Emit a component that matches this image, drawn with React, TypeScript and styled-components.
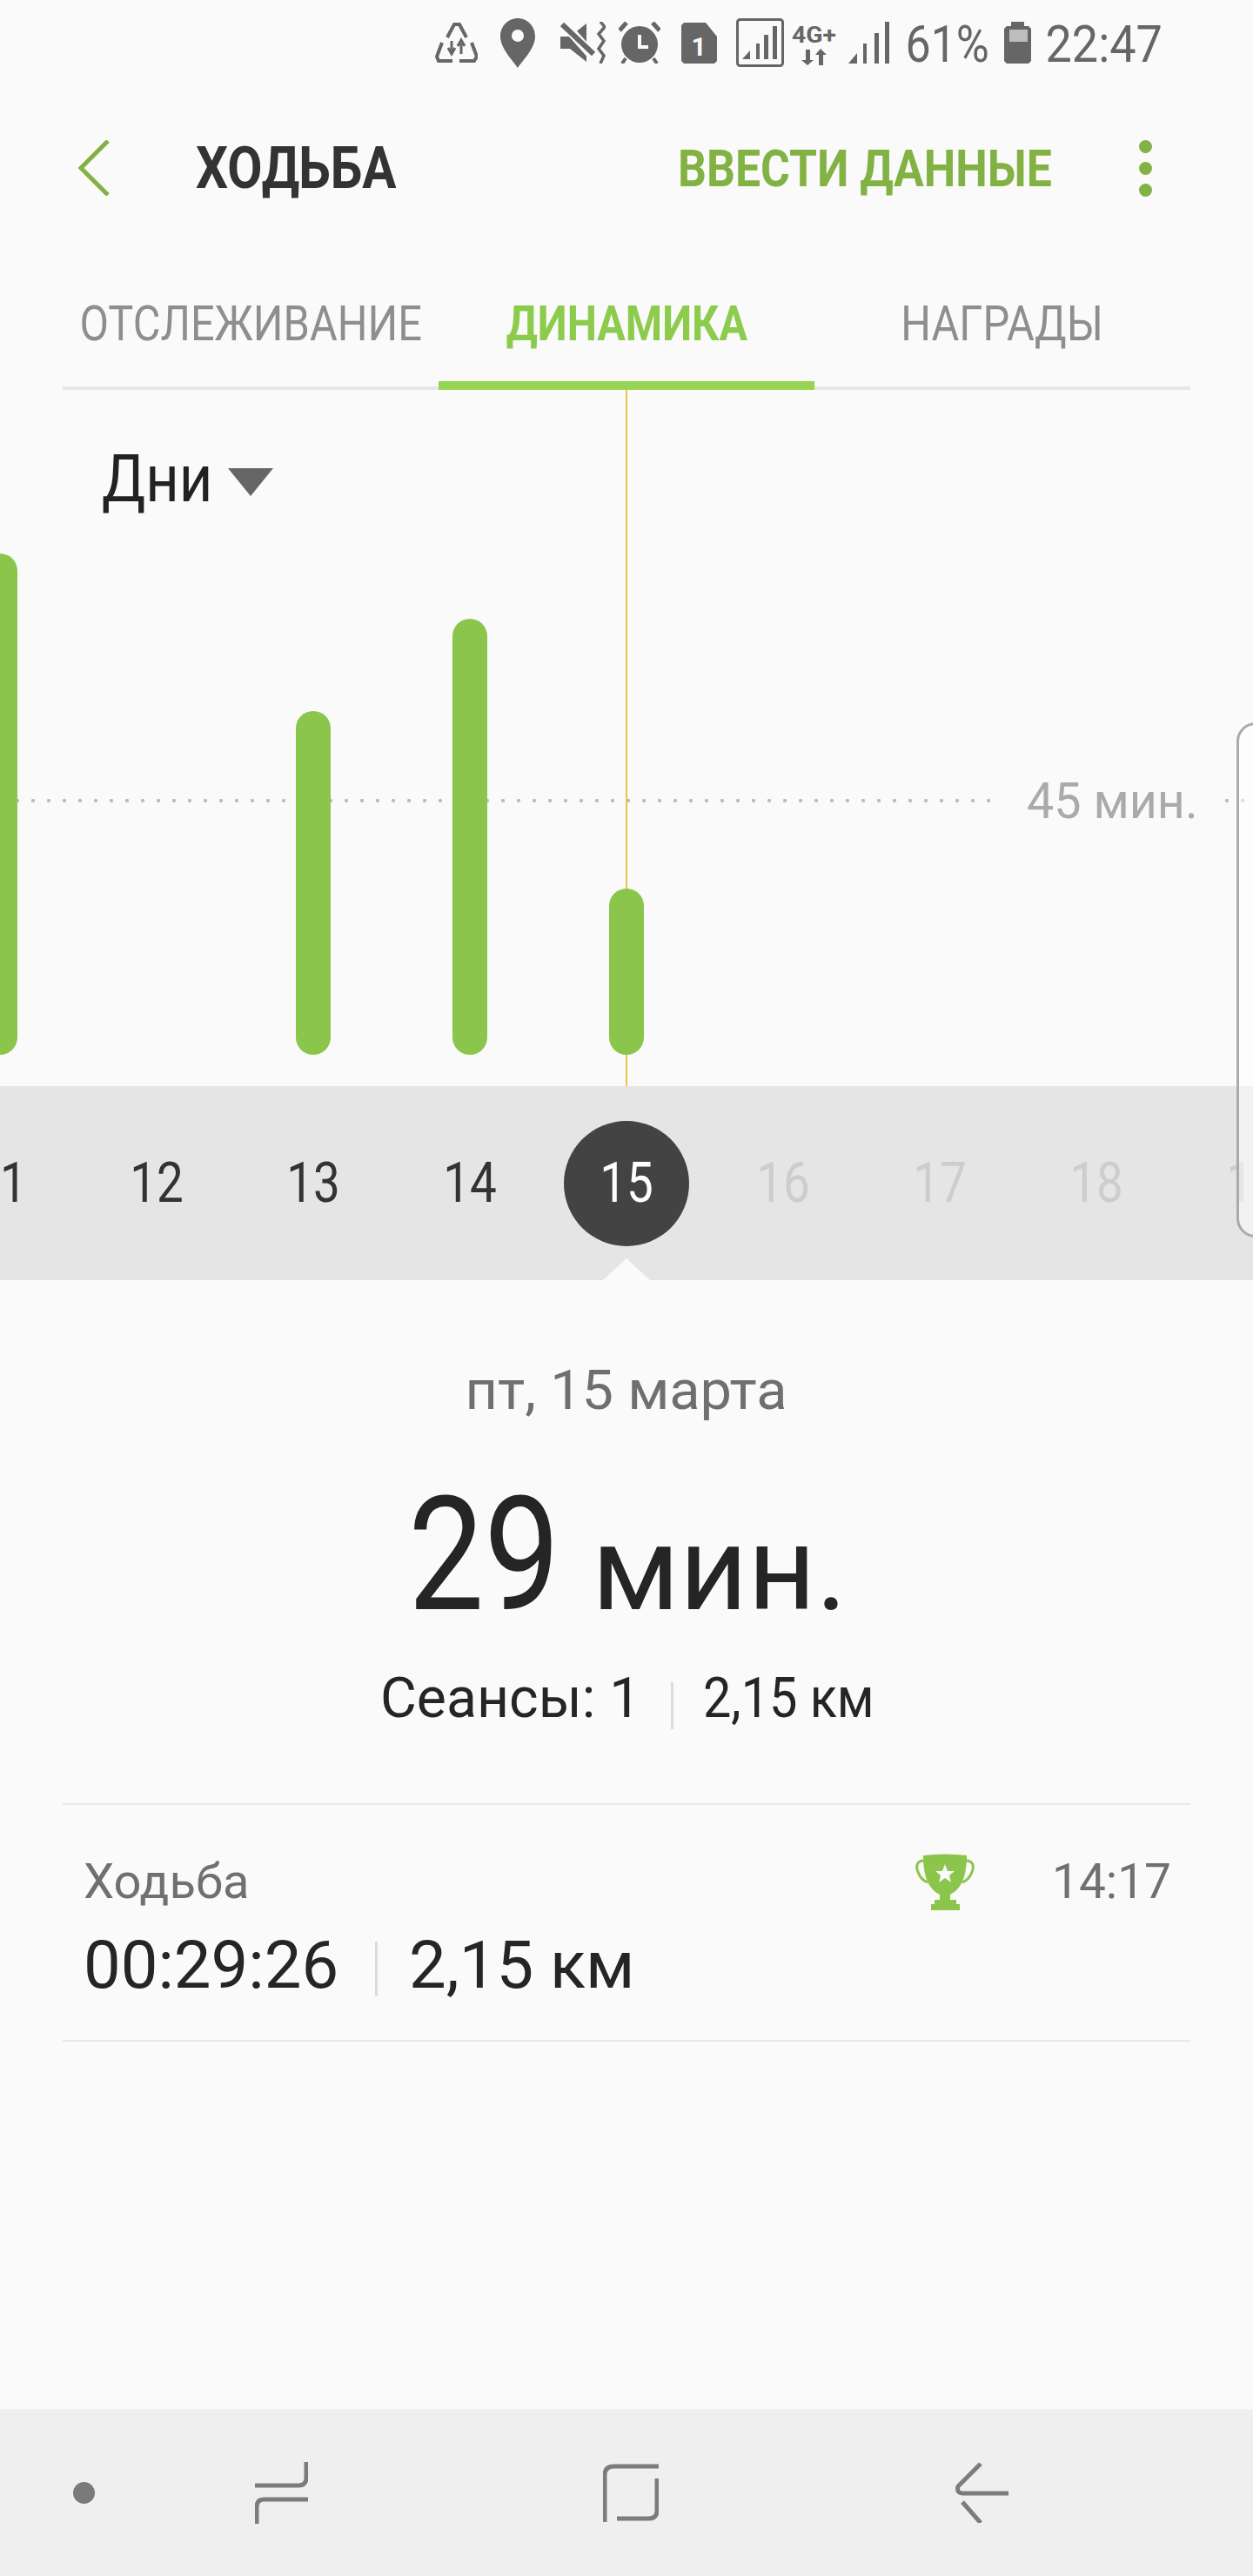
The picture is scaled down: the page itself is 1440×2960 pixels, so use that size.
import React from "react";
import styled, { createGlobalStyle } from "styled-components";

const Global = createGlobalStyle`
  html, body { margin: 0; padding: 0; background: #fafafa; }
  * { box-sizing: border-box; }
`;

const Page = styled.div`
  position: relative;
  width: 1440px;
  height: 2960px;
  overflow: hidden;
  background: #fafafa;
  display: flex;
  flex-direction: column;
  font-family: Roboto, "Liberation Sans", sans-serif;
`;

const Squeezed = styled.span<{ $x: number; $origin?: string }>`
  display: inline-block;
  white-space: nowrap;
  transform: scaleX(${(p) => p.$x});
  transform-origin: ${(p) => p.$origin || "center"} center;
`;

const StatusBar = styled.div`
  height: 98px;
  flex: none;
  display: flex;
  align-items: center;
  padding-left: 500px;
  color: #666;
`;

const StatusItem = styled.div<{ $gap: number; $w: number }>`
  margin-left: ${(p) => p.$gap}px;
  width: ${(p) => p.$w}px;
  flex: none;
  display: flex;
  align-items: center;
  justify-content: center;
`;

const StatusText = styled(StatusItem)`
  padding-top: 4px;
  font-size: 60px;
  line-height: 60px;
`;

const Toolbar = styled.div`
  height: 190px;
  flex: none;
  display: flex;
  align-items: center;
  padding-left: 90px;
`;

const Title = styled.div`
  margin-left: 99px;
  width: 230px;
  font-size: 66px;
  font-weight: 700;
  color: #333;
`;

const Action = styled.div`
  margin-left: 324px;
  width: 428px;
  font-size: 59px;
  font-weight: 700;
  color: #83b244;
`;

const Kebab = styled.div`
  margin-left: 102px;
  display: flex;
  flex-direction: column;
  gap: 10px;
`;

const KebabDot = styled.span`
  width: 15px;
  height: 15px;
  border-radius: 50%;
  background: #83b244;
`;

const Tabs = styled.div`
  height: 160px;
  flex: none;
  margin: 0 72px;
  display: grid;
  grid-template-columns: repeat(3, 432px);
  border-bottom: 4px solid #e6e6e6;
`;

const Tab = styled.div<{ $active?: boolean }>`
  position: relative;
  display: flex;
  align-items: center;
  justify-content: center;
  padding-top: 11px;
  font-size: 56px;
  font-weight: ${(p) => (p.$active ? 700 : 400)};
  color: ${(p) => (p.$active ? "#8ccb4c" : "#8e8e8e")};
  &::after {
    content: "";
    display: ${(p) => (p.$active ? "block" : "none")};
    position: absolute;
    left: 0;
    right: 0;
    bottom: -4px;
    height: 10px;
    background: #96d452;
  }
`;

const Chart = styled.div`
  position: relative;
  height: 800px;
  flex: none;
`;

const RangeSelect = styled.div`
  position: absolute;
  z-index: 2;
  left: 117px;
  top: 57px;
  display: flex;
  align-items: center;
  font-size: 76px;
  line-height: 90px;
  color: #222;
`;

const RangeLabel = styled.div`
  width: 122px;
`;

const Caret = styled.div`
  margin-left: 23px;
  margin-top: 8px;
  width: 0;
  height: 0;
  border-left: 26px solid transparent;
  border-right: 26px solid transparent;
  border-top: 32px solid #666;
`;

const Cursor = styled.div`
  position: absolute;
  left: 719px;
  top: 0;
  bottom: 0;
  width: 2px;
  background: #ecc643;
`;

const GoalLine = styled.div`
  position: absolute;
  left: 0;
  right: 0;
  top: 470px;
  height: 4px;
  display: flex;
  align-items: center;
`;

const Dots = styled.div<{ $w: number }>`
  width: ${(p) => p.$w}px;
  height: 4px;
  flex: none;
  background-image: radial-gradient(circle at 2px 2px, #bcbcbc 2px, transparent 2.3px);
  background-size: 18px 4px;
  background-repeat: repeat-x;
`;

const GoalLabel = styled.div`
  margin-left: 37px;
  margin-right: 35px;
  width: 193px;
  flex: none;
  font-size: 58px;
  color: #aaa;
`;

const Columns = styled.div`
  position: relative;
  height: 100%;
  margin-left: -90px;
  padding-bottom: 36px;
  display: grid;
  grid-template-columns: repeat(9, 180px);
  align-items: end;
  justify-items: center;
`;

const Bar = styled.div<{ $h: number }>`
  width: 40px;
  height: ${(p) => p.$h}px;
  border-radius: 20px;
  background: #8bc54b;
`;

const DateStrip = styled.div`
  height: 223px;
  flex: none;
  position: relative;
  margin-left: -90px;
  width: 1620px;
  background: #e5e5e5;
  display: grid;
  grid-template-columns: repeat(9, 180px);
  align-items: center;
  justify-items: center;
  &::after {
    content: "";
    position: absolute;
    left: 783px;
    bottom: 0;
    border-left: 27px solid transparent;
    border-right: 27px solid transparent;
    border-bottom: 25px solid #fafafa;
  }
`;

const Day = styled.div<{ $state: "past" | "current" | "future" }>`
  width: 144px;
  height: 144px;
  border-radius: 50%;
  display: flex;
  align-items: center;
  justify-content: center;
  font-size: 64px;
  background: ${(p) => (p.$state === "current" ? "#434343" : "transparent")};
  color: ${(p) =>
    p.$state === "current" ? "#fff" : p.$state === "past" ? "#333" : "#cdcdcd"};
`;

const EdgeHandle = styled.div`
  position: absolute;
  left: 1421px;
  top: 830px;
  width: 40px;
  height: 592px;
  border: 3px solid #aaa;
  border-radius: 22px 0 0 22px;
  background: rgba(255, 255, 255, 0.5);
`;

const Summary = styled.div`
  flex: none;
  height: 601px;
  display: flex;
  flex-direction: column;
  align-items: center;
  padding-top: 89px;
`;

const SummaryDate = styled.div`
  font-size: 63px;
  line-height: 76px;
  color: #6f6f6f;
`;

const Total = styled.div`
  margin-top: 41px;
  display: flex;
  align-items: baseline;
  height: 220px;
  color: #252525;
`;

const TotalValue = styled.span`
  font-size: 181px;
  line-height: 220px;
  width: 180px;
`;

const TotalUnit = styled.span`
  margin-left: 31px;
  font-size: 136px;
  width: 291px;
`;

const SummaryStats = styled.div`
  margin-top: 17px;
  display: flex;
  align-items: center;
  font-size: 64px;
  line-height: 76px;
  color: #252525;
`;

const StatCell = styled.div<{ $w: number }>`
  width: ${(p) => p.$w}px;
  flex: none;
`;

const Pipe = styled.span<{ $h: number; $l: number; $r: number; $t: number }>`
  width: 3px;
  height: ${(p) => p.$h}px;
  background: #dcdcdc;
  margin: ${(p) => p.$t}px ${(p) => p.$r}px 0 ${(p) => p.$l}px;
  flex: none;
`;

const Session = styled.div`
  flex: none;
  height: 274px;
  margin: 0 72px;
  border-top: 2px solid #e8e8e8;
  border-bottom: 2px solid #e8e8e8;
  padding: 56px 24px 0;
`;

const SessionTop = styled.div`
  display: flex;
  align-items: center;
  height: 64px;
  font-size: 55px;
  color: #6f716f;
`;

const SessionName = styled.div`
  width: 185px;
`;

const SessionTime = styled.div`
  margin-left: 88px;
  width: 133px;
`;

const TrophyWrap = styled.div`
  margin-left: 771px;
  display: flex;
`;

const SessionStats = styled.div`
  margin-top: 19px;
  display: flex;
  align-items: center;
  font-size: 76px;
  line-height: 90px;
  color: #252525;
`;

const Spacer = styled.div`
  flex: 1;
`;

const NavBar = styled.div`
  height: 192px;
  flex: none;
  background: #efefef;
  display: flex;
  align-items: center;
  padding-left: 84px;
`;

const NavDot = styled.div`
  width: 25px;
  height: 25px;
  border-radius: 50%;
  background: #7a7a7a;
`;

const NavIcon = styled.svg<{ $gap: number }>`
  margin-left: ${(p) => p.$gap}px;
  flex: none;
  fill: none;
  stroke: #7c7c7c;
  stroke-width: 5;
`;

const Recycle = () => (
  <svg width="49" height="46" viewBox="0 0 49 46" fill="none" stroke="#666" strokeWidth="4">
    <path d="M14 17L22 2H28L36 17M8 23L2 39L4 44H20M42 23L48 39L45 44H28" />
    <path d="M19 21V33M15 29L19 36L23 29M30 36V24M26 27L30 20L34 27" strokeWidth="3" />
  </svg>
);
const Pin = () => (
  <svg width="40" height="57" viewBox="0 0 40 57">
    <path fill="#666" d="M20 0C31 0 40 9 40 21C40 34 27 47 20 57C13 47 0 34 0 21C0 9 9 0 20 0Z" />
    <circle cx="20" cy="20" r="7" fill="#fafafa" />
  </svg>
);
const Mute = () => (
  <svg width="52" height="48" viewBox="0 0 52 48" fill="none">
    <path fill="#666" d="M0 17H11L30 2V46L11 31H0Z" />
    <path d="M2 0L38 40" stroke="#fafafa" strokeWidth="11" />
    <path d="M2 3L38 37" stroke="#666" strokeWidth="6" />
    <path d="M46 0L51 6L44 14L50 22L44 31L50 39L46 48" stroke="#666" strokeWidth="3.5" />
  </svg>
);
const Alarm = () => (
  <svg width="48" height="48" viewBox="0 0 48 48" fill="none">
    <circle cx="24" cy="26" r="21" fill="#666" />
    <path d="M24 15V29H34" stroke="#fafafa" strokeWidth="4" />
    <path d="M9 1L1 10M39 1L47 10" stroke="#666" strokeWidth="5" />
    <path d="M8 42L4 48M40 42L44 48" stroke="#666" strokeWidth="4" />
  </svg>
);
const Sim = () => (
  <svg width="41" height="47" viewBox="0 0 41 47">
    <path fill="#666" d="M3 0H28L41 16V44L38 47H3L0 44V3Z" />
    <text x="20" y="38" fontFamily="Roboto, sans-serif" fontSize="30" fontWeight="700" fill="#fafafa" textAnchor="middle">1</text>
  </svg>
);
const FramedSignal = () => (
  <svg width="55" height="56" viewBox="0 0 55 56" fill="#666">
    <rect x="1.5" y="1.5" width="52" height="53" rx="3" fill="none" stroke="#666" strokeWidth="3" />
    <path d="M7 47L16 37V47Z" />
    <rect x="23" y="29" width="4" height="18" />
    <rect x="32" y="19" width="5" height="28" />
    <rect x="42" y="9" width="5" height="38" />
  </svg>
);
const FourG = () => (
  <svg width="51" height="52" viewBox="0 -4 51 52" fill="#666">
    <text x="0" y="22" fontFamily="Roboto, sans-serif" fontSize="26" fontWeight="700" textLength="51" lengthAdjust="spacingAndGlyphs">4G+</text>
    <path d="M16 30H21V42H25L18 48L11 42H16ZM31 48V36H27L33 29L40 36H36V48Z" />
  </svg>
);
const Signal = () => (
  <svg width="47" height="48" viewBox="0 0 47 48" fill="#666">
    <path d="M0 48L10 36V48Z" />
    <rect x="17" y="25" width="4" height="23" />
    <rect x="30" y="13" width="5" height="35" />
    <rect x="42" y="0" width="5" height="48" />
  </svg>
);
const Battery = () => (
  <svg width="31" height="48" viewBox="0 0 31 48" fill="#666">
    <path d="M8 0H23V5H28L31 8V45L28 48H3L0 45V8L3 5H8Z" />
    <rect x="6" y="9" width="21" height="14" fill="#bdbdbd" />
  </svg>
);
const Trophy = () => (
  <svg width="69" height="65" viewBox="0 0 69 65">
    <path fill="#8bc54b" d="M9 2Q34 -1 59 2C59 24 54 40 40 47V53H47V58H51V65H18V58H22V53H28V47C14 40 9 24 9 2Z" />
    <path fill="none" stroke="#8bc54b" strokeWidth="3" d="M10 8C2 8 0 14 3 21C5 27 9 31 14 33M58 8C66 8 68 14 65 21C63 27 59 31 54 33" />
    <path fill="#fafafa" d="M34 12L37 20L45 20L39 25L41 33L34 28L27 33L29 25L23 20L31 20Z" />
  </svg>
);

const days: { n: number; s: "past" | "current" | "future" }[] = [
  { n: 11, s: "past" }, { n: 12, s: "past" }, { n: 13, s: "past" }, { n: 14, s: "past" },
  { n: 15, s: "current" }, { n: 16, s: "future" }, { n: 17, s: "future" }, { n: 18, s: "future" }, { n: 19, s: "future" },
];
const bars = [576, 0, 395, 501, 191, 0, 0, 0, 0];

export default function App() {
  return (
    <Page>
      <Global />
      <StatusBar>
        <StatusItem $gap={0} $w={49}><Recycle /></StatusItem>
        <StatusItem $gap={26} $w={40}><Pin /></StatusItem>
        <StatusItem $gap={29} $w={52}><Mute /></StatusItem>
        <StatusItem $gap={15} $w={48}><Alarm /></StatusItem>
        <StatusItem $gap={24} $w={41}><Sim /></StatusItem>
        <StatusItem $gap={22} $w={55}><FramedSignal /></StatusItem>
        <StatusItem $gap={9} $w={51}><FourG /></StatusItem>
        <StatusItem $gap={14} $w={47}><Signal /></StatusItem>
        <StatusText $gap={21} $w={92}><Squeezed $x={0.865}>61%</Squeezed></StatusText>
        <StatusItem $gap={19} $w={31}><Battery /></StatusItem>
        <StatusText $gap={19} $w={130}><Squeezed $x={0.9}>22:47</Squeezed></StatusText>
      </StatusBar>
      <Toolbar>
        <svg width="36" height="64" viewBox="0 0 36 64" fill="none" stroke="#83b244" strokeWidth="5">
          <path d="M34 1L3 32L34 63" />
        </svg>
        <Title><Squeezed $x={0.885} $origin="left">ХОДЬБА</Squeezed></Title>
        <Action><Squeezed $x={0.876} $origin="left">ВВЕСТИ ДАННЫЕ</Squeezed></Action>
        <Kebab><KebabDot /><KebabDot /><KebabDot /></Kebab>
      </Toolbar>
      <Tabs>
        <Tab><Squeezed $x={0.87}>ОТСЛЕЖИВАНИЕ</Squeezed></Tab>
        <Tab $active><Squeezed $x={0.865}>ДИНАМИКА</Squeezed></Tab>
        <Tab><Squeezed $x={0.87}>НАГРАДЫ</Squeezed></Tab>
      </Tabs>
      <Chart>
        <RangeSelect>
          <RangeLabel><Squeezed $x={0.88} $origin="left">Дни</Squeezed></RangeLabel>
          <Caret />
        </RangeSelect>
        <Cursor />
        <GoalLine>
          <Dots $w={1143} />
          <GoalLabel><Squeezed $x={0.96} $origin="left">45 мин.</Squeezed></GoalLabel>
          <Dots $w={40} />
        </GoalLine>
        <Columns>
          {bars.map((h, i) => (h ? <Bar key={i} $h={h} /> : <span key={i} />))}
        </Columns>
      </Chart>
      <DateStrip>
        {days.map((d) => (
          <Day key={d.n} $state={d.s}><Squeezed $x={0.855}>{d.n}</Squeezed></Day>
        ))}
      </DateStrip>
      <Summary>
        <SummaryDate><Squeezed $x={1.03}>пт, 15 марта</Squeezed></SummaryDate>
        <Total>
          <TotalValue><Squeezed $x={0.858} $origin="left">29</Squeezed></TotalValue>
          <TotalUnit><Squeezed $x={1} $origin="left">мин.</Squeezed></TotalUnit>
        </Total>
        <SummaryStats>
          <StatCell $w={290}><Squeezed $x={1.005} $origin="left">Сеансы: 1</Squeezed></StatCell>
          <Pipe $h={54} $l={44} $r={34} $t={16} />
          <StatCell $w={195}><Squeezed $x={0.9} $origin="left">2,15 км</Squeezed></StatCell>
        </SummaryStats>
      </Summary>
      <Session>
        <SessionTop>
          <SessionName><Squeezed $x={1.02} $origin="left">Ходьба</Squeezed></SessionName>
          <TrophyWrap><Trophy /></TrophyWrap>
          <SessionTime>14:17</SessionTime>
        </SessionTop>
        <SessionStats>
          <span>00:29:26</span>
          <Pipe $h={63} $l={42} $r={36} $t={9} />
          <span>2,15 км</span>
        </SessionStats>
      </Session>
      <Spacer />
      <NavBar>
        <NavDot />
        <NavIcon $gap={184} width="61" height="71" viewBox="0 0 61 71">
          <path d="M0 27H50Q59 27 59 18V0M61 43H10Q2 43 2 52V71" />
        </NavIcon>
        <NavIcon $gap={339} width="64" height="67" viewBox="0 0 64 67">
          <path d="M64 3H12Q2 3 2 13V67M62 17V54Q62 63 52 63H16" />
        </NavIcon>
        <NavIcon $gap={341} width="61" height="69" viewBox="0 0 61 69">
          <path d="M29 1L3 27Q1 35 9 35H61M8 45L29 69" />
        </NavIcon>
      </NavBar>
      <EdgeHandle />
    </Page>
  );
}
